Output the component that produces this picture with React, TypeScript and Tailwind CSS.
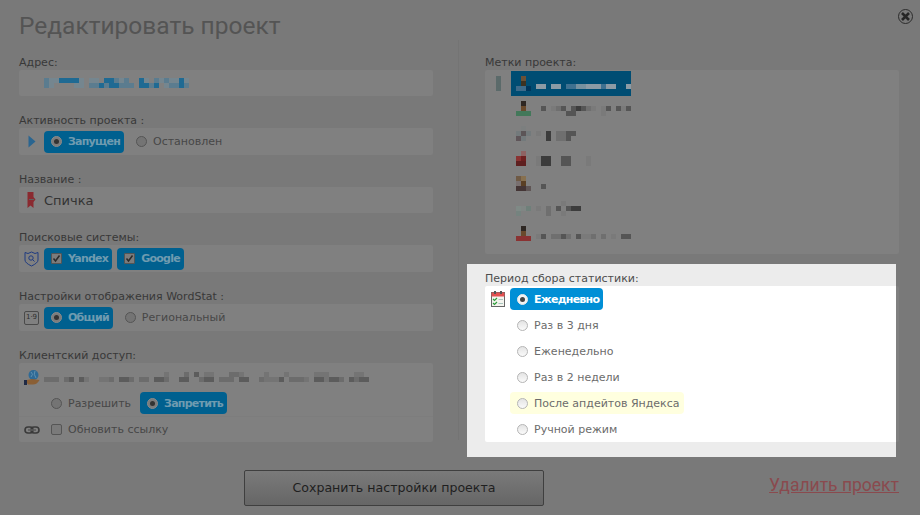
import React from 'react';

const FONT = { fontFamily: '"DejaVu Sans", sans-serif' };
const TITLE_FONT = { fontFamily: 'Roboto, sans-serif' };

// blurred-out bits of the screenshot, one char per 5px cell
const Mosaic = ({ rows, colors, cell = 5 }: { rows: string[]; colors: Record<string, string>; cell?: number }) => (
  <svg width={rows[0].length * cell} height={rows.length * cell} className="block shrink-0" shapeRendering="crispEdges">
    {rows.map((row, y) =>
      row.split('').map((c, x) =>
        colors[c] ? <rect key={`${x}-${y}`} x={x * cell} y={y * cell} width={cell} height={cell} fill={colors[c]} /> : null
      )
    )}
  </svg>
);

const Radio = ({ on, bright }: { on?: boolean; bright?: boolean }) => {
  let look = 'border-[#555] bg-[#747474]';
  if (bright) look = on ? 'border-[#e8e8e8] bg-[#f4f4f4]' : 'border-[#b5b5b5] bg-gradient-to-b from-[#e4e4e4] to-[#fafafa]';
  else if (on) look = 'border-[#8a8a8a] bg-[#7c7c7c]';
  return (
    <span className={`flex h-[11px] w-[11px] shrink-0 items-center justify-center rounded-full border ${look}`}>
      {on && <span className={`h-[5px] w-[5px] rounded-full ${bright ? 'bg-[#444]' : 'bg-[#333]'}`} />}
    </span>
  );
};

const Check = () => (
  <span className="flex h-[11px] w-[11px] shrink-0 items-center justify-center rounded-[1px] border border-[#555] bg-[#7c7c7c]">
    <svg width="9" height="9" viewBox="0 0 9 9" fill="none" stroke="#2b2b2b" strokeWidth="1.5">
      <path d="M1.5 4.5 L3.5 7 L7.5 1.5" />
    </svg>
  </span>
);

const Label = ({ children, className = 'text-[#383838]' }: { children: React.ReactNode; className?: string }) => (
  <div className={`flex h-4 items-center pt-[2px] text-[11px] ${className}`}>{children}</div>
);

const Field = ({ label, className, children }: { label: string; className: string; children: React.ReactNode }) => (
  <div className="mb-4">
    <Label>{label}</Label>
    <div className={`rounded-[2px] bg-[#808080] ${className}`}>{children}</div>
  </div>
);

const IconSlot = ({ children }: { children: React.ReactNode }) => (
  <span className="flex w-[25px] shrink-0 items-center justify-center">{children}</span>
);

const OnButton = ({ children, label }: { children: React.ReactNode; label: string }) => (
  <span className="flex h-[22px] items-center gap-[6px] rounded-[4px] bg-[#00608f] pl-[7px] pr-[4px] text-[11px] font-bold tracking-[-0.75px] text-[#6f9bb0]">
    {children}
    <span className="pt-[2px]">{label}</span>
  </span>
);

const Option = ({ label }: { label: string }) => (
  <span className="ml-3 flex items-center gap-[6px] text-[11px] text-[#474747]">
    <Radio />
    <span className="pt-[2px]">{label}</span>
  </span>
);

const addressMosaic = ['21133331011033212003102121131', '21000011022323322203323012232'];
const clientMosaic = [
  '00000000000000000000000010002030110002210000100010000011100000110',
  '22202303100112033202203320033002330222033002111302221033133203233',
];

const avatars = [
  { rows: ['0a0', '0b0', 'ccd'], colors: { a: '#6b5137', b: '#3d3222', c: '#3f6b8a', d: '#00365c' }, text: ['0000000000000000000', '1101102233111211001']  },
  { rows: ['0a0', '0b0', 'ccc'], colors: { a: '#2e2723', b: '#6a4a2c', c: '#43785a' }, text: ['0000000000000000000', '0301230343210130313', '0000003300000100000'] },
  { rows: ['0a0', 'bcb', 'db0'], colors: { a: '#7c7f7f', b: '#737a7c', c: '#5c5557', d: '#5f5559' }, text: ['000000000', '104022330', '004022300'] },
  { rows: ['0a0', 'bc0', 'dd0'], colors: { a: '#8f6363', b: '#8a3333', c: '#6e2020', d: '#5f2020' }, text: ['00000000000', '14400330001', '14400330001'] },
  { rows: ['ab0', 'cd0', 'eef'], colors: { a: '#6f5a45', b: '#87704f', c: '#797070', d: '#5a3f24', e: '#443535', f: '#5f5555' }, text: ['00', '03'] },
  { rows: ['000', 'abc', 'd00'], colors: { a: '#7f8a86', b: '#808684', c: '#6f807a', d: '#75837f' }, text: ['000001000', '102030344', '002001000'] },
  { rows: ['0a0', '0b0', 'ccc'], colors: { a: '#2e2723', b: '#6a4a2c', c: '#8a3232' }, text: ['0000000000000000000', '1302232031120201033'] },
];

const greys = { '1': '#7a7a7a', '2': '#6f6f6f', '3': '#555555', '4': '#3c3c3c' };

const periods = ['Раз в 3 дня', 'Еженедельно', 'Раз в 2 недели'];

const App = () => (
  <div className="relative h-[515px] w-[920px] overflow-hidden bg-[#797979] text-[#383838]" style={FONT}>
    <button className="absolute left-[898px] top-[9px] flex h-[15px] w-[15px] items-center justify-center rounded-full border border-[#2c2c2c]">
      <svg width="11" height="11" viewBox="0 0 11 11" stroke="#262626" strokeWidth="2.6">
        <path d="M2 2 L9 9 M9 2 L2 9" />
      </svg>
    </button>

    <h1 className="h-[54px] pl-[19px] pt-[10px] text-[24.5px] leading-[32px] text-[#545454]" style={TITLE_FONT}>
      Редактировать проект
    </h1>

    <div className="flex h-[403px] pl-[19px]">
      <div className="w-[414px]">
        <Field label="Адрес:" className="flex h-[26px] items-center pl-[25px]">
          <Mosaic rows={addressMosaic} colors={{ '1': '#75868f', '2': '#5b7c8f', '3': '#1f6a93' }} />
        </Field>

        <Field label="Активность проекта :" className="flex h-[27px] items-center">
          <IconSlot>
            <svg width="8" height="13" viewBox="0 0 8 13">
              <path d="M0.5 0.5 L7.5 6.5 L0.5 12.5 Z" fill="#2a6590" />
            </svg>
          </IconSlot>
          <OnButton label="Запущен">
            <Radio on />
          </OnButton>
          <Option label="Остановлен" />
        </Field>

        <Field label="Название :" className="flex h-[26px] items-center">
          <IconSlot>
            <svg width="9" height="16" viewBox="0 0 9 16">
              <path d="M0.5 0 H6.5 V5 L8.5 7.5 L6.5 10 V16 L3.5 13.5 L0.5 16 Z" fill="#8a2a30" />
              <path d="M2 7.5 H7" stroke="#5f5f5f" strokeWidth="1" />
            </svg>
          </IconSlot>
          <span className="pt-px text-[13px] text-[#333]">Спичка</span>
        </Field>

        <Field label="Поисковые системы:" className="flex h-[27px] items-center">
          <IconSlot>
            <svg width="15" height="16" viewBox="0 0 15 16" fill="none" stroke="#1f3b80" strokeWidth="1">
              <path d="M1 1.5 L4 2.5 L7.5 1 L11 2.5 L14 1.5 V9 Q14 12 7.5 15 Q1 12 1 9 Z" />
              <circle cx="7" cy="7" r="2.2" />
              <path d="M8.5 8.5 L10.5 10.5" />
            </svg>
          </IconSlot>
          <span className="flex gap-[5px]">
            <OnButton label="Yandex">
              <Check />
            </OnButton>
            <OnButton label="Google">
              <Check />
            </OnButton>
          </span>
        </Field>

        <Field label="Настройки отображения WordStat :" className="flex h-[27px] items-center">
          <IconSlot>
            <span className="flex h-[14px] w-[15px] items-center justify-center rounded-[2px] border border-[#4a4a4a] text-[7px] text-[#2f2f2f]">
              1·9
            </span>
          </IconSlot>
          <OnButton label="Общий">
            <Radio on />
          </OnButton>
          <Option label="Региональный" />
        </Field>

        <Field label="Клиентский доступ:" className="flex h-[79px] flex-col">
          <div className="flex h-[28px] items-center">
            <IconSlot>
              <svg width="16" height="15" viewBox="0 0 16 15">
                <circle cx="9.5" cy="5" r="5" fill="#2f6a96" />
                <path d="M7 2 Q10 4 7 7 M11 1 Q9 4 12 8" fill="none" stroke="#5f90b0" strokeWidth="1" />
                <path d="M3 10 L8 9 L15.5 10 Q13 14.5 9 14.5 H4 L3 13 Z" fill="#8a5f35" />
                <rect x="0" y="10" width="3" height="5" fill="#1f2a45" />
              </svg>
            </IconSlot>
            <Mosaic rows={clientMosaic} colors={{ '1': '#747474', '2': '#6c6c6c', '3': '#5c5c5c' }} />
          </div>
          <div className="flex h-[24px] items-center pl-[32px]">
            <span className="flex items-center gap-[6px] text-[11px] text-[#474747]">
              <Radio />
              <span className="pt-[2px]">Разрешить</span>
            </span>
            <span className="ml-[9px]">
              <OnButton label="Запретить">
                <Radio on />
              </OnButton>
            </span>
          </div>
          <div className="mt-px flex h-[26px] items-center border-t border-[#7d7d7d]">
            <IconSlot>
              <svg width="16" height="8" viewBox="0 0 16 8" fill="none" stroke="#3a3a3a" strokeWidth="1.6">
                <rect x="1" y="1" width="8" height="6" rx="3" />
                <rect x="7" y="1" width="8" height="6" rx="3" />
                <path d="M4 4 H12" stroke="#5a5a5a" />
              </svg>
            </IconSlot>
            <span className="ml-[7px] flex items-center gap-[6px] text-[11px] text-[#474747]">
              <span className="h-[11px] w-[11px] rounded-[2px] border border-[#555] bg-[#7a7a7a]" />
              <span className="pt-px">Обновить ссылку</span>
            </span>
          </div>
        </Field>
      </div>

      <div className="ml-[25px] mr-[26px] mt-[-14px] h-[400px] w-px shrink-0 bg-[#747474]" />

      <div className="w-[414px]">
        <Label>Метки проекта:</Label>
        <div className="relative h-[184px] rounded-[2px] bg-[#808080] pl-[26px] pt-px">
          <span className="absolute left-[11px] top-[6px] h-[15px] w-[5px] bg-[#5b6a6a]" />
          {avatars.map((a, i) => (
            <div key={i} className={`flex h-[25px] w-[120px] items-center gap-[5px] pl-[5px] ${i === 0 ? 'bg-[#004d73]' : ''}`}>
              <Mosaic rows={a.rows} colors={a.colors} />
              <Mosaic
                rows={a.text}
                colors={i === 0 ? { '1': '#8c9ba5', '2': '#3f7190', '3': '#77919f' } : greys}
              />
            </div>
          ))}
        </div>

        <div className="relative ml-[-18px] mt-[10px] h-[193px] w-[429px] bg-[#ececec] pl-[18px] pt-[6px]">
          <Label className="text-[#4d4d4d]">Период сбора статистики:</Label>
          <div className="rounded-l-[2px] bg-white text-[11px] text-[#6c6c6c]">
            <div className="flex h-[26px] items-center pl-[6px]">
              <svg width="14" height="16" viewBox="0 0 14 16" className="mr-[5px] shrink-0">
                <rect x="0.5" y="1.5" width="13" height="14" fill="#f4f4ee" stroke="#666" />
                <rect x="0.5" y="1.5" width="13" height="4" fill="#e25050" />
                <rect x="3" y="0" width="2" height="3" fill="#555" />
                <rect x="9" y="0" width="2" height="3" fill="#555" />
                <path d="M2 8 L3.5 9.5 L6 7 M2 12 L3.5 13.5 L6 11" fill="none" stroke="#2c9c3a" strokeWidth="1.2" />
                <path d="M7.5 8.5 H12 M7.5 12.5 H12" stroke="#a9c5c0" strokeWidth="1" />
              </svg>
              <span className="flex h-[22px] items-center gap-[6px] rounded-[4px] bg-[#008fd6] pl-[7px] pr-[4px] font-bold tracking-[-0.75px] text-white">
                <Radio on bright />
                <span className="pt-[2px]">Ежедневно</span>
              </span>
            </div>
            {periods.map(p => (
              <div key={p} className="flex h-[26px] items-center gap-[6px] pl-[32px]">
                <Radio bright />
                <span className="pt-[2px]">{p}</span>
              </div>
            ))}
            <div className="flex h-[26px] items-center pl-[25px]">
              <span className="flex h-[22px] items-center gap-[6px] rounded-[4px] bg-[#ffffdf] pl-[7px] pr-[4px]">
                <Radio bright />
                <span className="pt-[2px]">После апдейтов Яндекса</span>
              </span>
            </div>
            <div className="flex h-[26px] items-center gap-[6px] pl-[32px]">
              <Radio bright />
              <span className="pt-[2px]">Ручной режим</span>
            </div>
          </div>
          <span className="absolute left-[429px] top-[22px] h-[156px] w-[3px] rounded-r-[2px] bg-[#808080]" />
        </div>
      </div>
    </div>

    <div className="mt-[13px] flex h-[36px] items-center pl-[244px] pr-[21px]">
      <button className="h-[36px] w-[300px] rounded-[2px] border border-[#3f3f3f] bg-gradient-to-b from-[#7a7a7a] to-[#666666] pt-px text-[12.6px] text-[#1f1f1f]">
        Сохранить настройки проекта
      </button>
      <a href="#" className="ml-auto pb-[6px] text-[17.5px] leading-[24px] text-[#8a4a4e] underline" style={TITLE_FONT}>
        Удалить проект
      </a>
    </div>
  </div>
);

export default App;
